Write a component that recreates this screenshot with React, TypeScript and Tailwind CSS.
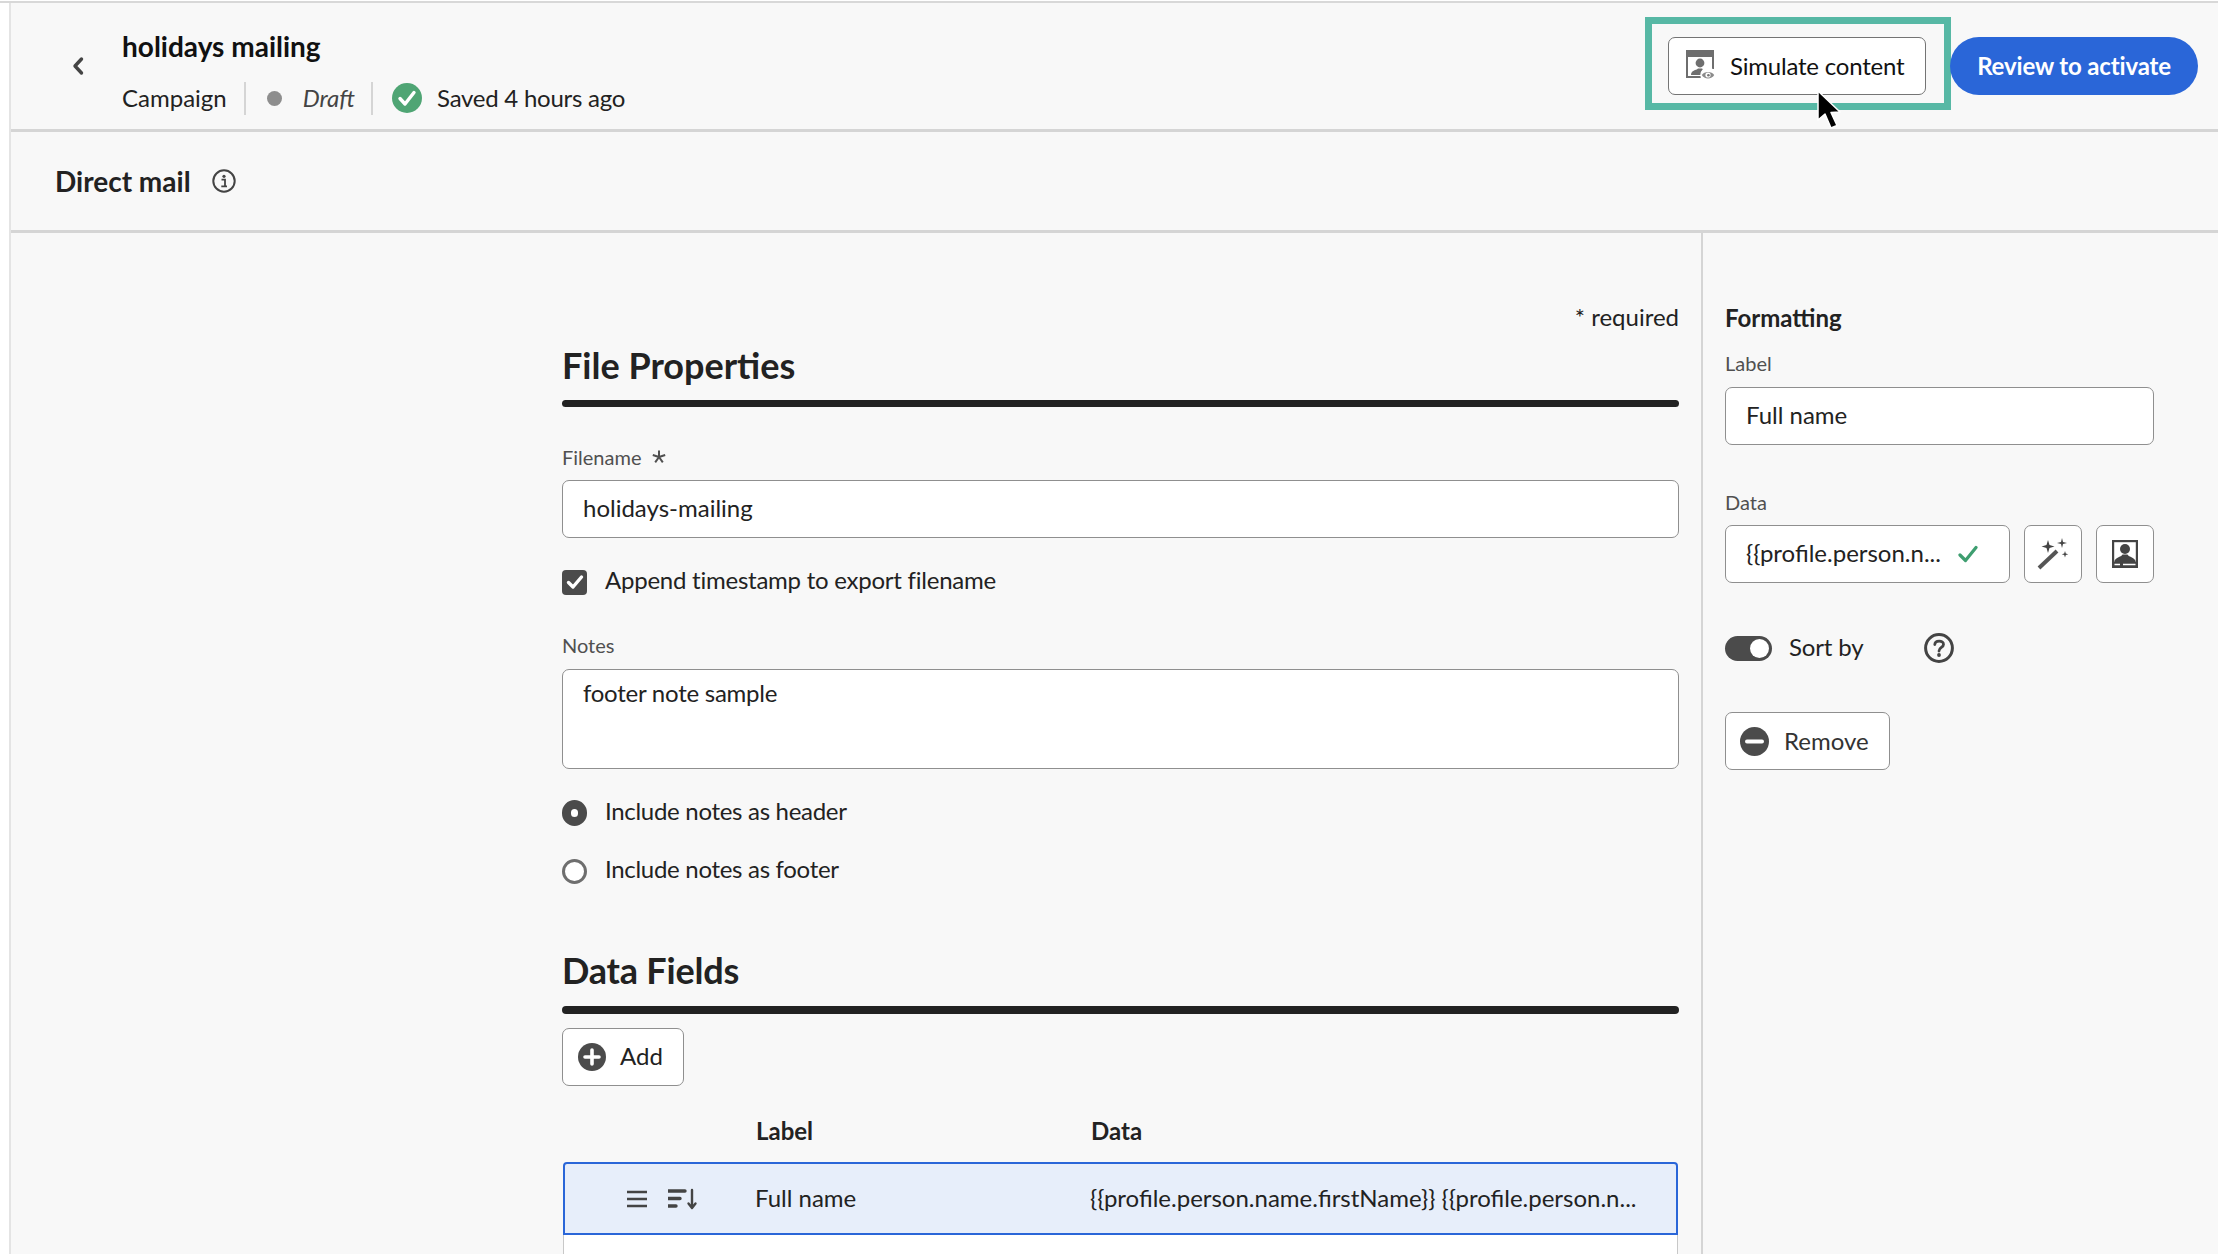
import React from "react";

const font = "font-['Lato','Noto_Sans',sans-serif]";

function Chevron() {
  return (
    <svg width="14" height="20" viewBox="0 0 14 20" className="shrink-0">
      <path d="M10.5 3 L4 10 L10.5 17" fill="none" stroke="#444" strokeWidth="3.4" strokeLinecap="round" strokeLinejoin="round" />
    </svg>
  );
}

function SavedCheck() {
  return (
    <svg width="30" height="30" viewBox="0 0 30 30" className="shrink-0">
      <circle cx="15" cy="15" r="15" fill="#4fa574" />
      <path d="M8 15.5 L13 21 L22 9.5" fill="none" stroke="#fff" strokeWidth="3.4" strokeLinecap="round" strokeLinejoin="round" />
    </svg>
  );
}

function InfoIcon() {
  return (
    <svg width="24" height="24" viewBox="0 0 24 24" className="shrink-0">
      <circle cx="12" cy="12" r="10.7" fill="none" stroke="#444" strokeWidth="2" />
      <circle cx="12" cy="7.3" r="1.6" fill="#444" />
      <path d="M9.5 10.6 H13 V17 M9.3 17.3 H15" fill="none" stroke="#444" strokeWidth="1.8" />
    </svg>
  );
}

function SimulateIcon() {
  return (
    <svg width="30" height="32" viewBox="0 0 30 32" className="shrink-0">
      <path d="M0 0 H28 V7 H0 Z" fill="#6e6e6e" />
      <path d="M1 6 H27 V19 M19 27 H1 V6" fill="none" stroke="#6e6e6e" strokeWidth="2" />
      <circle cx="14" cy="13" r="4.4" fill="#6e6e6e" />
      <path d="M5 25 C5 20 10 20.5 12 18.5 H16 C17.5 20 19 20 20 21 L17 25 Z" fill="#6e6e6e" />
      <circle cx="22" cy="25" r="7" fill="#fff" stroke="#fff" strokeWidth="1.5" />
      <path d="M15.8 25 C18 21 26 21 28.2 25 C26 29.5 18 29.5 15.8 25 Z" fill="#8a8a8a" />
      <circle cx="22" cy="25" r="2.6" fill="#fff" />
      <circle cx="22.4" cy="25.2" r="1.3" fill="#777" />
    </svg>
  );
}

function Cursor() {
  return (
    <svg width="26" height="42" viewBox="0 0 26 42" className="absolute left-[1815px] top-[89px]">
      <path d="M3 2 V31 L10 25 L16 39 L22 36.5 L16 23.5 L25 23 Z" fill="#000" stroke="#fff" strokeWidth="1.5" strokeLinejoin="round" />
    </svg>
  );
}

function Field({ children, className = "" }: { children: React.ReactNode; className?: string }) {
  return (
    <div className={`flex h-[58px] items-center rounded-[7px] border border-[#8f8f8f] bg-white px-[20px] pb-[2px] text-[24px] text-[#222] ${className}`}>
      {children}
    </div>
  );
}

function Label({ children, className = "" }: { children: React.ReactNode; className?: string }) {
  return <div className={`h-[26px] text-[20px] leading-[26px] text-[#505050] ${className}`}>{children}</div>;
}

function SectionTitle({ children, className = "" }: { children: React.ReactNode; className?: string }) {
  return <div className={`h-[44px] text-[36px] font-bold leading-[44px] text-[#222] ${className}`}>{children}</div>;
}

function Radio({ checked, label, className = "" }: { checked?: boolean; label: string; className?: string }) {
  return (
    <div className={`flex h-[30px] items-center gap-[18px] text-[24px] text-[#222] ${className}`}>
      {checked ? (
        <span className="box-border h-[26px] w-[25px] rounded-full border-[9px] border-[#4b4b4b] bg-white" />
      ) : (
        <span className="box-border h-[25px] w-[25px] rounded-full border-[3px] border-[#6e6e6e] bg-white" />
      )}
      <span className="pb-[4px] tracking-[-0.3px]">{label}</span>
    </div>
  );
}

export default function App() {
  return (
    <div className={`${font} relative flex h-[1254px] w-[2218px] flex-col overflow-hidden bg-white`}>
      <div className="h-[3px] shrink-0 border-b-2 border-[#d8d8d8]" />
      <div className="ml-[9px] flex min-h-0 flex-1 flex-col border-l-2 border-[#e4e4e4] bg-[#f8f8f8]">
        {/* Header */}
        <header className="flex h-[129px] shrink-0 items-start border-b-[3px] border-[#d5d5d5] pr-[20px]">
          <div className="ml-[60px] mr-[37px] mt-[53px]"><Chevron /></div>
          <div className="flex flex-col pt-[26px]">
            <div className="h-[34px] text-[28px] font-bold leading-[34px] text-[#111]">holidays mailing</div>
            <div className="mt-[18px] flex h-[34px] items-center text-[24px] text-[#222]">
              <span>Campaign</span>
              <span className="ml-[17px] h-[33px] w-[2px] bg-[#d5d5d5]" />
              <span className="ml-[21px] h-[15px] w-[15px] rounded-full bg-[#8e8e8e]" />
              <span className="ml-[21px] italic text-[#444]">Draft</span>
              <span className="ml-[16px] h-[33px] w-[2px] bg-[#d5d5d5]" />
              <span className="ml-[19px]"><SavedCheck /></span>
              <span className="ml-[15px] tracking-[-0.25px]">Saved 4 hours ago</span>
            </div>
          </div>
          <div className="ml-auto mt-[14px] box-border flex h-[93px] w-[306px] items-start border-[7px] border-[#57b8a5] pl-[16px] pt-[13px]">
            <button className="flex h-[58px] w-[258px] items-center rounded-[7px] border border-[#747474] bg-white pl-[17px] text-[24px] text-[#111]">
              <SimulateIcon />
              <span className="ml-[14px] tracking-[-0.2px]">Simulate content</span>
            </button>
          </div>
          <button className="ml-[-1px] mt-[34px] flex h-[58px] w-[248px] items-center justify-center rounded-full bg-[#2a66d8] text-[24px] font-bold tracking-[-0.15px] text-white">
            Review to activate
          </button>
        </header>

        {/* Section bar */}
        <div className="flex h-[101px] shrink-0 items-center border-b-[3px] border-[#d5d5d5] pl-[44px]">
          <span className="text-[28px] font-bold text-[#222]">Direct mail</span>
          <span className="ml-[21px]"><InfoIcon /></span>
        </div>

        {/* Main */}
        <div className="flex min-h-0 flex-1">
          {/* Form */}
          <main className="flex min-h-0 w-[1690px] shrink-0 flex-col pl-[551px] pr-[22px] pt-[69px]">
            <div className="h-[30px] text-right text-[24px] leading-[30px] text-[#222]">* required</div>
            <SectionTitle className="mt-[11px]">File Properties</SectionTitle>
            <div className="mt-[13px] h-[7px] rounded-full bg-[#222]" />
            <Label className="mt-[37px] flex items-center gap-[11px]">
              <span>Filename</span>
              <svg width="14" height="14" viewBox="0 0 14 14">
                <path d="M7 7 V0.5 M7 7 L13.2 5 M7 7 L10.8 12.3 M7 7 L3.2 12.3 M7 7 L0.8 5" fill="none" stroke="#505050" strokeWidth="2" />
              </svg>
            </Label>
            <Field className="mt-[10px] h-[57px]">holidays-mailing</Field>
            <div className="mt-[29px] flex h-[30px] items-center gap-[18px] text-[24px] text-[#222]">
              <span className="flex h-[25px] w-[25px] items-center justify-center rounded-[4px] bg-[#4b4b4b]">
                <svg width="18" height="16" viewBox="0 0 18 16">
                  <path d="M2.5 8.5 L7 13 L15.5 3" fill="none" stroke="#fff" strokeWidth="3.4" strokeLinecap="round" strokeLinejoin="round" />
                </svg>
              </span>
              <span className="pb-[4px] tracking-[-0.24px]">Append timestamp to export filename</span>
            </div>
            <Label className="mt-[35px]">Notes</Label>
            <div className="mt-[11px] h-[100px] rounded-[7px] border border-[#8f8f8f] bg-white px-[20px] pt-[8px] text-[24px] leading-[30px] tracking-[-0.25px] text-[#222]">
              footer note sample
            </div>
            <Radio checked label="Include notes as header" className="mt-[29px]" />
            <Radio label="Include notes as footer" className="mt-[28px]" />
            <SectionTitle className="mt-[62px] tracking-[-0.2px]">Data Fields</SectionTitle>
            <div className="mt-[14px] h-[8px] rounded-full bg-[#222]" />
            <button className="mt-[14px] flex h-[58px] w-[122px] shrink-0 items-center rounded-[7px] border border-[#8f8f8f] bg-white pb-[2px] pl-[15px] text-[24px] text-[#222]">
              <svg width="28" height="28" viewBox="0 0 28 28" className="mt-[2px] shrink-0">
                <circle cx="14" cy="14" r="14" fill="#4b4b4b" />
                <path d="M14 7 V21 M7 14 H21" stroke="#fff" strokeWidth="3.6" strokeLinecap="round" />
              </svg>
              <span className="ml-[14px]">Add</span>
            </button>
            <div className="mt-[30px] flex h-[30px] shrink-0 items-center pl-[194px] text-[24px] font-bold text-[#222]">
              <span className="w-[335px]">Label</span>
              <span>Data</span>
            </div>
            <div className="mx-[1px] mt-[16px] flex min-h-0 flex-1 flex-col">
              <div className="box-border flex h-[73px] shrink-0 items-center rounded-t-[4px] border-2 border-[#2a66d8] bg-[#e7eefa] text-[24px] text-[#222]">
                <svg width="20" height="18" viewBox="0 0 20 18" className="ml-[62px] shrink-0">
                  <path d="M0 2 H20 M0 9 H20 M0 16 H20" stroke="#444" strokeWidth="2.4" />
                </svg>
                <svg width="30" height="22" viewBox="0 0 30 22" className="ml-[21px] shrink-0">
                  <path d="M0 3 H17 M0 10.5 H12 M0 18 H8" stroke="#444" strokeWidth="3.4" strokeLinecap="round" />
                  <path d="M24 2 V19 M20.5 15.5 L24 20 L27.5 15.5" fill="none" stroke="#444" strokeWidth="2.4" strokeLinecap="round" strokeLinejoin="round" />
                </svg>
                <span className="ml-[57px] w-[335px] shrink-0 pb-[2px]">Full name</span>
                <span className="whitespace-nowrap pb-[2px]">{"{{profile.person.name.firstName}} {{profile.person.n..."}</span>
              </div>
              <div className="flex-1 border-x border-[#c8c8c8] bg-white" />
            </div>
          </main>

          {/* Side panel */}
          <aside className="flex min-w-0 flex-1 flex-col border-l-2 border-[#d5d5d5] pl-[22px] pr-[64px] pt-[70px]">
            <div className="h-[30px] text-[24px] font-bold leading-[30px] text-[#222]">Formatting</div>
            <Label className="mt-[17px]">Label</Label>
            <Field className="mt-[11px]">Full name</Field>
            <Label className="mt-[44px]">Data</Label>
            <div className="mt-[10px] flex h-[58px] gap-[14px]">
              <Field className="w-[285px] justify-between pr-[31px]">
                <span className="whitespace-nowrap">{"{{profile.person.n..."}</span>
                <svg width="20" height="18" viewBox="0 0 20 18" className="mt-[2px] shrink-0">
                  <path d="M2 10 L7.5 15.5 L18 2.5" fill="none" stroke="#3e9e70" strokeWidth="3.2" strokeLinecap="round" strokeLinejoin="round" />
                </svg>
              </Field>
              <button className="flex h-[58px] w-[58px] items-center justify-center rounded-[7px] border border-[#8f8f8f] bg-white">
                <svg width="32" height="32" viewBox="0 0 32 32">
                  <path d="M2 30 L20 13" stroke="#555" strokeWidth="4" strokeLinecap="butt" />
                  <path d="M11 2 L12.5 7 L17.5 8.5 L12.5 10 L11 15 L9.5 10 L4.5 8.5 L9.5 7 Z" fill="#444" />
                  <path d="M25 0 L26 4 L30 5 L26 6 L25 10 L24 6 L20 5 L24 4 Z" fill="#444" />
                  <path d="M28 13 L28.8 15.5 L31.3 16.3 L28.8 17 L28 19.5 L27.2 17 L24.7 16.3 L27.2 15.5 Z" fill="#444" />
                </svg>
              </button>
              <button className="flex h-[58px] w-[58px] items-center justify-center rounded-[7px] border border-[#8f8f8f] bg-white">
                <svg width="26" height="28" viewBox="0 0 26 28">
                  <path d="M0 0 H26 V28 H0 Z" fill="#444" />
                  <path d="M2.2 2.2 H23.8 V22 H2.2 Z" fill="#fff" />
                  <circle cx="13" cy="9" r="5" fill="#444" />
                  <path d="M2.2 22 C3 17 9 17.5 10.5 14.5 H15.5 C17 17.5 23 17 23.8 22 Z" fill="#444" />
                  <path d="M2.5 24.5 H8 M11 24.5 H23.5" stroke="#fff" strokeWidth="1.4" />
                </svg>
              </button>
            </div>
            <div className="mt-[50px] flex h-[30px] items-center text-[24px] text-[#222]">
              <span className="flex h-[25px] w-[47px] items-center justify-end rounded-full bg-[#4b4b4b] pr-[3px]">
                <span className="h-[19px] w-[19px] rounded-full bg-white" />
              </span>
              <span className="ml-[17px] pb-[3px] tracking-[-0.15px]">Sort by</span>
              <svg width="30" height="30" viewBox="0 0 30 30" className="ml-[60px] shrink-0">
                <circle cx="15" cy="15" r="13.4" fill="none" stroke="#444" strokeWidth="3" />
                <path d="M10.8 11.5 C11 7 19.5 7 19.5 11.5 C19.5 14.5 15 14.5 15 18" fill="none" stroke="#444" strokeWidth="2.8" strokeLinecap="round" />
                <circle cx="15" cy="22" r="1.9" fill="#444" />
              </svg>
            </div>
            <button className="mt-[49px] flex h-[58px] w-[165px] items-center rounded-[7px] border border-[#8f8f8f] bg-white pl-[14px] text-[24px] text-[#333]">
              <svg width="29" height="29" viewBox="0 0 29 29" className="shrink-0">
                <circle cx="14.5" cy="14.5" r="14.5" fill="#4b4b4b" />
                <path d="M7 14.5 H22" stroke="#fff" strokeWidth="4" strokeLinecap="round" />
              </svg>
              <span className="ml-[15px]">Remove</span>
            </button>
          </aside>
        </div>
      </div>
      <Cursor />
    </div>
  );
}
